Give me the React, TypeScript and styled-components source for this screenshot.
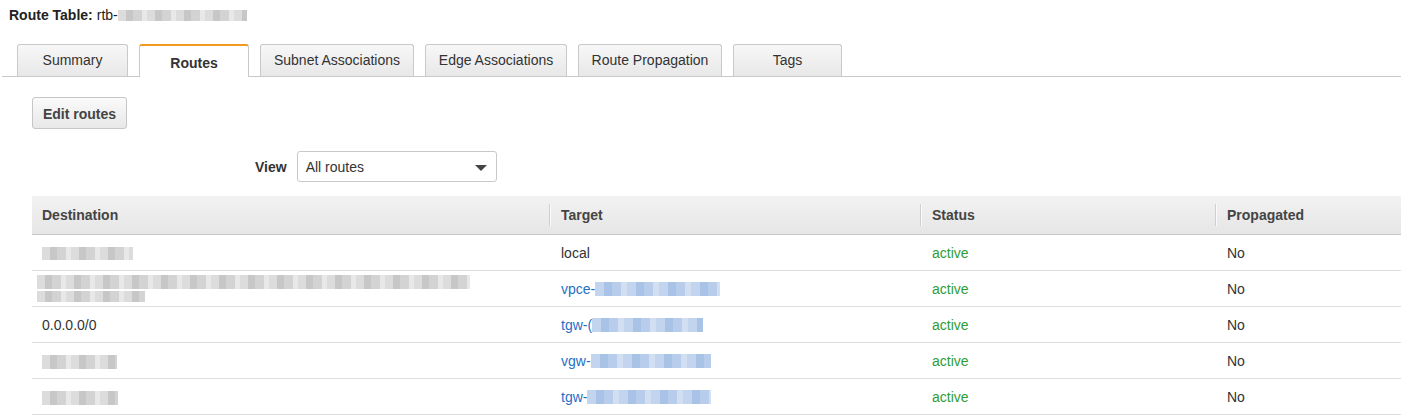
import React from "react";
import styled, { createGlobalStyle } from "styled-components";

interface Route {
  destination: React.ReactNode;
  prefix: string;
  blurWidth: number;
  local?: boolean;
}

const tabs = [
  { label: "Summary", width: 111 },
  { label: "Routes", width: 110, active: true },
  { label: "Subnet Associations", width: 154 },
  { label: "Edge Associations", width: 142 },
  { label: "Route Propagation", width: 144 },
  { label: "Tags", width: 109 },
];

const GlobalStyle = createGlobalStyle`
  body {
    margin: 0;
    background: #fff;
    font-family: "Liberation Sans", Arial, Helvetica, sans-serif;
    color: #333;
  }
`;

export default function App() {
  const routes: Route[] = [
    { destination: <Blur $w={91} $h={13} />, prefix: "", blurWidth: 0, local: true },
    {
      destination: (
        <BlurStack>
          <Blur $w={433} $h={14} />
          <Blur $w={108} $h={11} />
        </BlurStack>
      ),
      prefix: "vpce-",
      blurWidth: 125,
    },
    { destination: "0.0.0.0/0", prefix: "tgw-(", blurWidth: 111 },
    { destination: <Blur $w={75} $h={14} />, prefix: "vgw-", blurWidth: 120 },
    { destination: <Blur $w={76} $h={14} />, prefix: "tgw-", blurWidth: 124 },
  ];

  return (
    <Page>
      <GlobalStyle />
      <Title>
        <strong>Route Table:</strong> rtb-
        <Blur $w={129} $h={11} />
      </Title>
      <TabBar>
        {tabs.map((t) => (
          <Tab key={t.label} $w={t.width} $active={!!t.active}>
            {t.label}
          </Tab>
        ))}
      </TabBar>
      <Content>
        <Button>Edit routes</Button>
        <ViewRow>
          <ViewLabel>View</ViewLabel>
          <Select>
            All routes
            <Caret />
          </Select>
        </ViewRow>
        <Table>
          <colgroup>
            <col style={{ width: 517 }} />
            <col style={{ width: 371 }} />
            <col style={{ width: 295 }} />
            <col />
          </colgroup>
          <thead>
            <tr>
              <Th>Destination</Th>
              <Th>Target</Th>
              <Th>Status</Th>
              <Th>Propagated</Th>
            </tr>
          </thead>
          <tbody>
            {routes.map((r, i) => (
              <tr key={i}>
                <Td>{r.destination}</Td>
                <Td>
                  {r.local ? (
                    "local"
                  ) : (
                    <Link>
                      {r.prefix}
                      <Blur $w={r.blurWidth} $h={14} $blue />
                    </Link>
                  )}
                </Td>
                <Td>
                  <Status>active</Status>
                </Td>
                <Td>No</Td>
              </tr>
            ))}
          </tbody>
        </Table>
      </Content>
    </Page>
  );
}

const Page = styled.div`
  width: 1401px;
  font-size: 14px;
`;

const Title = styled.div`
  padding: 7px 9px 0;
  line-height: 16px;
  height: 16px;
  display: flex;
  align-items: center;
  color: #222;

  strong {
    margin-right: 4px;
  }
`;

const Blur = styled.span<{ $w: number; $h: number; $blue?: boolean }>`
  display: inline-block;
  vertical-align: middle;
  width: ${(p) => p.$w}px;
  height: ${(p) => p.$h}px;
  filter: blur(0.7px);
  background: ${(p) =>
    p.$blue
      ? `repeating-linear-gradient(90deg, #c3d5ee 0 9px, #a9c3e6 9px 17px, #b7cdeb 17px 26px, #d2def2 26px 32px)`
      : `repeating-linear-gradient(90deg, #dcdcdc 0 8px, #c7c7c7 8px 15px, #d3d3d3 15px 24px, #e8e8e8 24px 29px)`};
`;

const BlurStack = styled.span`
  display: flex;
  flex-direction: column;
  gap: 2px;
  margin-left: -5px;
`;

const TabBar = styled.div`
  display: flex;
  gap: 11px;
  margin: 21px 0 0 2px;
  padding-left: 15px;
  border-bottom: 1px solid #c9c9c9;
  height: 32px;
`;

const Tab = styled.div<{ $w: number; $active: boolean }>`
  box-sizing: border-box;
  width: ${(p) => p.$w}px;
  height: ${(p) => (p.$active ? 33 : 32)}px;
  display: flex;
  align-items: center;
  justify-content: center;
  border: 1px solid #c9c9c9;
  border-bottom: none;
  border-radius: 3px 3px 0 0;
  color: #333;
  padding-bottom: 1px;
  font-weight: ${(p) => (p.$active ? 700 : 400)};
  background: ${(p) =>
    p.$active ? "#fff" : "linear-gradient(#f7f7f7, #e8e8e8)"};
  ${(p) =>
    p.$active &&
    `
    border-top: 2px solid #f39a1e;
    padding-top: 3px;
    padding-bottom: 0;
  `}
`;

const Content = styled.div`
  padding: 20px 0 0 32px;
`;

const Button = styled.button`
  box-sizing: border-box;
  width: 95px;
  height: 32px;
  font-family: inherit;
  font-size: 14px;
  font-weight: 700;
  color: #444;
  background: linear-gradient(#fafafa, #e8e8e8);
  border: 1px solid #c6c6c6;
  border-radius: 3px;
  padding: 2px 0 0;
`;

const ViewRow = styled.div`
  display: flex;
  align-items: center;
  gap: 10px;
  margin: 22px 0 0 223px;
`;

const ViewLabel = styled.span`
  font-weight: 700;
  color: #333;
`;

const Select = styled.div`
  box-sizing: border-box;
  width: 200px;
  height: 31px;
  border: 1px solid #c9c9c9;
  border-radius: 3px;
  padding: 0 9px 0 8px;
  display: flex;
  align-items: center;
  justify-content: space-between;
  color: #333;
`;

const Caret = styled.span`
  width: 0;
  height: 0;
  border-left: 6px solid transparent;
  border-right: 6px solid transparent;
  border-top: 6px solid #444;
  margin-top: 2px;
`;

const Table = styled.table`
  margin-top: 14px;
  width: 1369px;
  table-layout: fixed;
  border-collapse: collapse;
`;

const Th = styled.th`
  position: relative;
  height: 38px;
  padding: 0 0 0 12px;
  text-align: left;
  font-weight: 700;
  color: #444;
  background: linear-gradient(#f2f2f2, #e6e6e6);
  border-bottom: 1px solid #c9c9c9;

  &:first-child {
    padding-left: 10px;
  }

  &:not(:first-child)::before {
    content: "";
    position: absolute;
    left: 0;
    top: 8px;
    height: 22px;
    width: 1px;
    background: #cfcfcf;
    box-shadow: 1px 0 0 #fafafa;
  }
`;

const Td = styled.td`
  height: 35px;
  padding: 0 0 0 12px;
  border-bottom: 1px solid #dedede;
  color: #333;
  vertical-align: middle;

  &:first-child {
    padding-left: 10px;
  }
`;

const Link = styled.span`
  color: #1f6fc5;
  display: inline-flex;
  align-items: center;
`;

const Status = styled.span`
  color: #2e9e36;
`;
